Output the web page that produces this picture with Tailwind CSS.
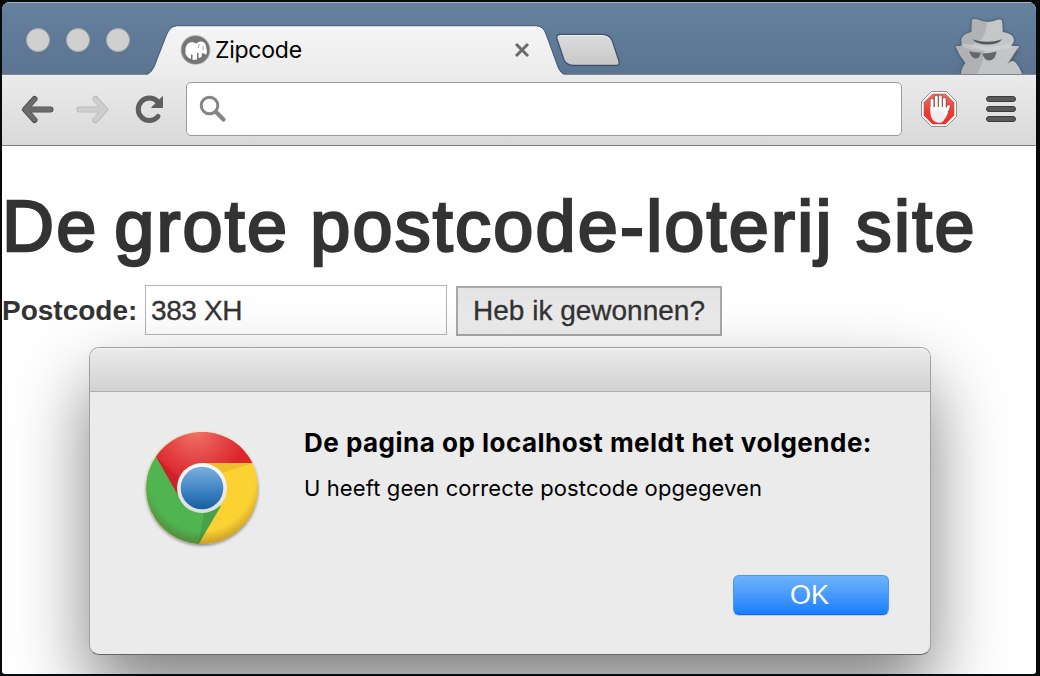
<!DOCTYPE html>
<html lang="nl">
<head>
<meta charset="utf-8">
<title>Zipcode</title>
<script src="https://cdn.jsdelivr.net/npm/@tailwindcss/browser@4"></script>
</head>
<body class="w-[1040px] h-[676px] overflow-hidden bg-[#08090b] pt-[2px] pl-[2px]">
<div class="relative flex h-[672px] w-[1034px] flex-col overflow-hidden rounded-t-[8px] rounded-b-[3px] bg-white font-['Liberation_Sans',sans-serif] text-[#333]">

  <!-- tab strip -->
  <header class="relative flex h-[73px] shrink-0 items-start border-t border-[#a5b5c6] bg-linear-to-b from-[#66819e] to-[#5a7491]">
    <svg class="absolute -top-px left-0" width="1034" height="73" viewBox="2 2 1034 73">
      <defs>
        <linearGradient id="tab" x1="0" y1="0" x2="0" y2="1"><stop offset="0" stop-color="#f5f5f5"/><stop offset="1" stop-color="#ebebeb"/></linearGradient>
        <linearGradient id="nt" x1="0" y1="0" x2="0" y2="1"><stop offset="0" stop-color="#dcdcdc"/><stop offset="1" stop-color="#c8c8c8"/></linearGradient>
        <linearGradient id="spy" x1="0" y1="0" x2="0" y2="1"><stop offset="0" stop-color="#c6c7c9"/><stop offset="1" stop-color="#c3c4c6"/></linearGradient>
        <filter id="sh" x="-20%" y="-20%" width="140%" height="140%"><feDropShadow dx="0" dy="0" stdDeviation="1.6" flood-color="#1d2e42" flood-opacity=".8"/></filter>
      </defs>
      <path d="M0 74.500H146Q151 73.500 154 67L166 36Q170 26 176 26H537Q543 26 546 34L558 67Q561 74.500 566 74.500H1040V80H0Z" fill="url(#tab)" stroke="#40566f" stroke-width="1"/>
      <path d="M176 27H537" stroke="#fff"/>
      <path d="M559 34.500H602Q609 34.500 612 40L619 61Q620 65.500 616 65.500H574Q567 65.500 564 60L557 39Q556 34.500 559 34.500Z" fill="url(#nt)" stroke="#3d546d" stroke-width="1.300"/>
      <path d="M560 35.500H602Q607 36 610 39" fill="none" stroke="#eee"/>
      <g filter="url(#sh)">
        <path d="M972 20Q974 18.500 977 19.500Q987 24 997 20Q1001 18.500 1002 21L1002.700 32Q1014 34 1014 40Q1014 43 1010.700 45.700L1019.300 46.300Q1017 54 1008 63Q1012 59 1016 63Q1020 68 1022 74H961Q962 67 965.500 63Q959 55 955.700 46.300L963 45.700Q961 42 961.500 39Q963 34 971.700 32Z" fill="url(#spy)"/>
      </g>
      <path d="M972 20Q974 18.500 977 19.500L987 22.500Q987 32 980 41L970 46L984 50Q984 62 977 74H961Q962 67 965.500 63Q959 55 955.700 46.300L963 45.700Q961 42 961.500 39Q963 34 971.700 32Z" fill="#9b9da0" opacity=".5"/>
      <path d="M961.500 43Q987 50 1013 43L1010.700 45.700L1016 46.500Q996 52 982 51Q968 50 961 46Z" fill="#dcdddf" opacity=".4"/>
      <path d="M972.300 39.200Q987 44.500 1002.300 39.200Q998 44.500 987.300 44.500Q977 44.500 972.300 39.200Z" fill="#55575a"/>
      <path d="M969.300 51.300Q975 53 980.700 52.500Q980 58.500 975.500 58.500Q971 58 969.300 51.300ZM982.300 53.500Q990 53.500 996.500 51.500Q995.500 60.500 989 60.500Q984 60 982.300 53.500Z" fill="#656669"/>
      <path d="M1018.500 47L1005.500 67Q1009 61.500 1012 61Q1017 55 1018.500 47Z" fill="#58636f"/>
      <path d="M0 74.500H148M564 74.500H1040" stroke="#7d858e"/>
    </svg>
    <div class="relative flex gap-4 pt-[25px] pl-6">
      <i class="size-6 rounded-full border border-[#a9acb0] bg-[#d0d0d0]"></i>
      <i class="size-6 rounded-full border border-[#a9acb0] bg-[#d0d0d0]"></i>
      <i class="size-6 rounded-full border border-[#a9acb0] bg-[#d0d0d0]"></i>
    </div>
    <div class="relative ml-[50px] mt-[22px] flex h-[49px] w-[351px] items-center">
      <svg width="32" height="32" viewBox="0 0 32 32"><circle cx="15.500" cy="16" r="15" fill="#bbb"/><circle cx="15.500" cy="16" r="14" fill="#757575"/><path d="M5.500 20V14Q7 8 12.500 8L16 9.500L20 7.500Q25 7 26 12L27 18L26 21L24 19.500L22 19L21.500 23L18.500 24V19L17 19V25.500L12.500 26V20.500H11V25L8 23.500Z" fill="#fff"/><path d="M19.500 10L18 14M23 12V16" stroke="#aaa" fill="none"/></svg>
      <span class="ml-[3px] whitespace-nowrap font-['Inter',sans-serif] text-[23px] leading-8 tracking-[-0.250px] text-black">Zipcode</span>
      <svg class="ml-auto" width="18" height="18" viewBox="0 0 18 18"><path d="M3 3L15 15M15 3L3 15" stroke="#6b6b6b" stroke-width="3"/></svg>
    </div>
  </header>

  <!-- toolbar -->
  <div class="relative flex h-[71px] shrink-0 items-start border-b border-[#7c7c7c] bg-linear-to-b from-[#ebebeb] to-[#d9d9d9]">
    <svg class="mt-[17px] ml-4 shrink-0" width="150" height="36" viewBox="18 92 150 36" fill="none" stroke-linecap="round" stroke-linejoin="round">
      <path d="M50.500 109.500H27M34.500 99L25 109.500L34.500 120" stroke="#505050" stroke-width="6"/>
      <path d="M50.300 109.500H27M34.500 99.500L25 109.500L34.500 119.500" stroke="#6b6b6b" stroke-width="4.600"/>
      <path d="M79.500 109.500H103M95.500 99L105 109.500L95.500 120" stroke="#b8b8b8" stroke-width="6"/>
      <path d="M79.700 109.500H103M95.500 99.500L105 109.500L95.500 119.500" stroke="#cecece" stroke-width="4.600"/>
      <path d="M157.500 101.500A11.200 11.200 0 1 0 158 116.500" stroke="#5e5e5e" stroke-width="5"/>
      <path d="M162.500 97V107.500H152Z" fill="#5e5e5e" stroke="#5e5e5e" stroke-width="1"/>
    </svg>
    <div class="mt-[7px] ml-[18px] flex h-[54px] w-[716px] shrink-0 items-center rounded-[5px] border border-[#9b9b9b] bg-white pl-3">
      <svg width="28" height="28" viewBox="0 0 28 28"><circle cx="10.500" cy="10.500" r="8.300" fill="none" stroke="#858585" stroke-width="2.900"/><path d="M17 17L24.500 24.500" stroke="#858585" stroke-width="4.300" stroke-linecap="round"/></svg>
    </div>
    <svg class="mt-[15px] ml-[18px] shrink-0" width="38" height="38" viewBox="920 90 38 38">
      <defs><linearGradient id="r" x1="0" y1="0" x2="0" y2="1"><stop offset="0" stop-color="#f06a62"/><stop offset=".6" stop-color="#ec3a33"/><stop offset="1" stop-color="#fb2820"/></linearGradient></defs>
      <path d="M931.500 91.500H946.500L956.500 101.500V116.500L946.500 126.500H931.500L921.500 116.500V101.500Z" fill="#fff" stroke="#8f8f8f"/>
      <path d="M932.500 94H945.500L954 102.500V115.500L945.500 124H932.500L924 115.500V102.500Z" fill="url(#r)" stroke="#b9534f" stroke-width=".6"/>
      <path d="M932 109V100M936.300 108V97M940.300 108V96.800M944.300 109V99M945.500 114L948.500 106.500" stroke="#7f3836" stroke-width="4" stroke-linecap="round"/>
      <path d="M930.300 107H946L948 113Q944 123 939 123Q930.500 122 930.300 112Z" fill="#f1eeee"/>
      <path d="M932 110V100M936.300 110V97M940.300 110V96.800M944.300 111V99M945.500 114L948.500 106.500" stroke="#fafafa" stroke-width="3" stroke-linecap="round"/>
    </svg>
    <div class="mt-[21px] ml-[28px] flex w-[30px] flex-col gap-1">
      <i class="h-[6px] rounded-full border border-[#3c3c3c] bg-[#5a5a5a]"></i>
      <i class="h-[6px] rounded-full border border-[#3c3c3c] bg-[#5a5a5a]"></i>
      <i class="h-[6px] rounded-full border border-[#3c3c3c] bg-[#5a5a5a]"></i>
    </div>
  </div>

  <!-- page -->
  <main class="flex flex-1 flex-col">
    <h1 class="mt-[40px] whitespace-nowrap text-[72px] leading-[80px] font-normal tracking-[2.200px] [-webkit-text-stroke:2.500px_#333]"><span class="[word-spacing:-6.500px]">De </span><span class="[word-spacing:-1.300px]">grote </span>postcode-loterij site</h1>
    <form class="mt-[19px] flex items-start whitespace-nowrap">
      <label class="w-[143px] text-[28px] leading-[51px] font-bold">Postcode:</label>
      <div class="h-[50px] w-[302px] border border-[#b5b5b5] bg-white pl-[5px] text-[28px] leading-[49px] tracking-[-0.400px] [-webkit-text-stroke:0.300px_#333]">383 XH</div>
      <div class="mt-px ml-[9px] h-[50px] w-[266px] border-2 border-[#a9a9a9] bg-linear-to-b from-[#e3e3e3] to-[#f0f0f0] text-center text-[28px] leading-[45px] [-webkit-text-stroke:0.300px_#333]">Heb ik gewonnen?</div>
    </form>
  </main>

  <!-- alert over the page -->
  <div class="absolute top-[345px] left-[87px] flex h-[308px] w-[842px] flex-col rounded-[10px] border border-[#a0a0a0] border-b-[#666] bg-[#ebebeb] text-black shadow-[0_36px_72px_0_rgba(0,0,0,0.5)]">
    <div class="h-[44px] shrink-0 rounded-t-[9px] border-t border-b border-t-[#f6f6f6] border-b-[#afafaf] bg-linear-to-b from-[#ebebeb] to-[#d2d2d2]"></div>
    <div class="flex">
      <svg class="mt-[34px] ml-[50px] shrink-0" width="124" height="126" viewBox="-62 -62 124 126">
        <defs>
          <radialGradient id="cr" gradientUnits="userSpaceOnUse" cx="-6" cy="-58" r="50"><stop offset="0" stop-color="#ef7466"/><stop offset="1" stop-color="#dc262e"/></radialGradient>
          <linearGradient id="cb" x1="0" y1="0" x2="0" y2="1"><stop offset="0" stop-color="#7bafdf"/><stop offset=".6" stop-color="#3a7fc1"/><stop offset="1" stop-color="#175f9d"/></linearGradient>
          <radialGradient id="ce" gradientUnits="userSpaceOnUse" cx="0" cy="-10" r="66"><stop offset=".8" stop-color="#5a2d10" stop-opacity="0"/><stop offset="1" stop-color="#5a2d10" stop-opacity=".32"/></radialGradient>
          <linearGradient id="cw" x1="0" y1="0" x2="0" y2="1"><stop offset="0" stop-color="#fafafa"/><stop offset="1" stop-color="#ddd"/></linearGradient>
          <filter id="cs"><feDropShadow dx="0" dy="1.500" stdDeviation="1.500" flood-opacity=".45"/></filter>
        </defs>
        <g filter="url(#cs)"><circle r="56" fill="#fcd232"/></g>
        <path d="M-46 -31.500A56 56 0 0 0 -3.500 56L19 18L0 0Z" fill="#50b551"/>
        <path d="M-46 -31.500A56 56 0 0 1 50.500 -25H0L-24 7Z" fill="url(#cr)"/>
        <path d="M4 -25H50.500L20 -15Z" fill="#e8ba2e" opacity=".8"/>
        <path d="M-46 -31.500L-22 -9L-24 7Z" fill="#c3212a" opacity=".7"/>
        <path d="M-3.500 56L2 24L18 19Z" fill="#47a24a"/>
        <circle r="56" fill="url(#ce)"/>
        <circle r="25" fill="url(#cw)"/>
        <circle r="21.300" fill="url(#cb)"/>
      </svg>
      <div class="ml-[40px] font-['Inter',sans-serif] whitespace-nowrap">
        <p class="mt-[33px] text-[26px] leading-9 font-bold tracking-[0.490px]">De pagina op localhost meldt het volgende:</p>
        <p class="mt-[11px] text-[22px] leading-8 tracking-[0.100px]">U heeft geen correcte postcode opgegeven</p>
      </div>
    </div>
    <div class="mt-auto mr-[41px] mb-[39px] h-10 w-[156px] self-end rounded-[6px] border border-[#4a98ee] border-b-[#0c62ff] bg-linear-to-b from-[#6db3fa] to-[#157efc] pr-[3px] text-center text-[27px] leading-[38px] text-white shadow-[0_1px_1px_rgba(0,0,0,0.15)]">OK</div>
  </div>
</div>
</body>
</html>
